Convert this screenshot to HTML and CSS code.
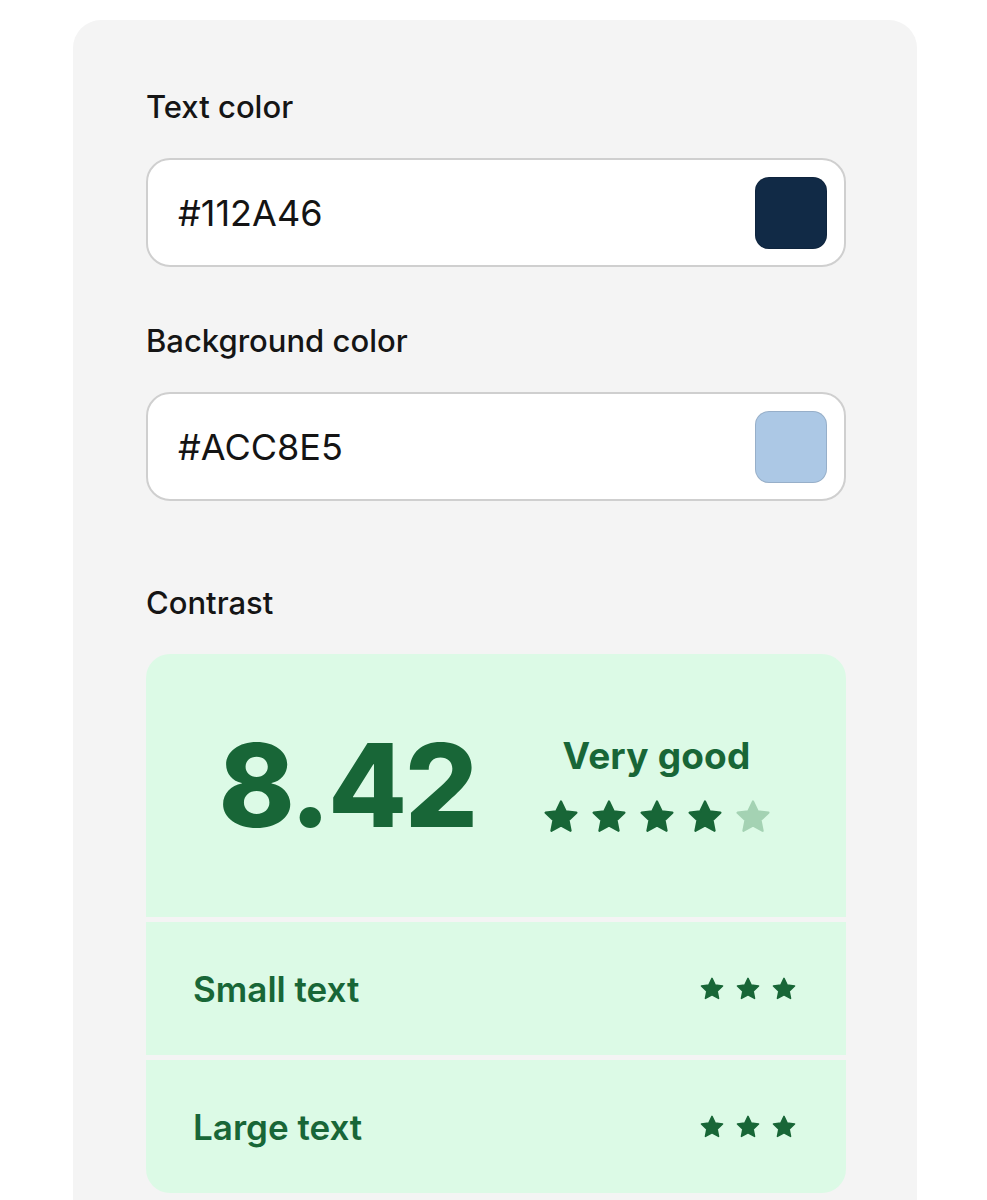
FILE: index.html
```html
<!DOCTYPE html>
<html lang="en">
<head>
<meta charset="utf-8">
<title>Contrast checker</title>
<link rel="stylesheet" href="styles.css">
</head>
<body>
<div class="card">
  <div class="field">
    <label class="label">Text color</label>
    <div class="input">
      <span class="value">#112A46</span>
      <span class="swatch swatch-dark"></span>
    </div>
  </div>
  <div class="field">
    <label class="label">Background color</label>
    <div class="input">
      <span class="value">#ACC8E5</span>
      <span class="swatch swatch-light"></span>
    </div>
  </div>
  <div class="field contrast">
    <label class="label">Contrast</label>
    <div class="panel">
      <div class="score">
        <div class="ratio">8.42</div>
        <div class="verdict">
          <div class="verdict-text">Very good</div>
          <div class="stars stars-big">
            <svg viewBox="0 0 24 24"><path d="M12 2.2l2.95 6.2 6.8.85-5 4.7 1.3 6.75L12 17.4l-6.05 3.3 1.3-6.75-5-4.7 6.8-.85z"/></svg>
            <svg viewBox="0 0 24 24"><path d="M12 2.2l2.95 6.2 6.8.85-5 4.7 1.3 6.75L12 17.4l-6.05 3.3 1.3-6.75-5-4.7 6.8-.85z"/></svg>
            <svg viewBox="0 0 24 24"><path d="M12 2.2l2.95 6.2 6.8.85-5 4.7 1.3 6.75L12 17.4l-6.05 3.3 1.3-6.75-5-4.7 6.8-.85z"/></svg>
            <svg viewBox="0 0 24 24"><path d="M12 2.2l2.95 6.2 6.8.85-5 4.7 1.3 6.75L12 17.4l-6.05 3.3 1.3-6.75-5-4.7 6.8-.85z"/></svg>
            <svg viewBox="0 0 24 24" class="off"><path d="M12 2.2l2.95 6.2 6.8.85-5 4.7 1.3 6.75L12 17.4l-6.05 3.3 1.3-6.75-5-4.7 6.8-.85z"/></svg>
          </div>
        </div>
      </div>
      <div class="row">
        <span class="row-label">Small text</span>
        <div class="stars stars-small">
          <svg viewBox="0 0 24 24"><path d="M12 2.2l2.95 6.2 6.8.85-5 4.7 1.3 6.75L12 17.4l-6.05 3.3 1.3-6.75-5-4.7 6.8-.85z"/></svg>
          <svg viewBox="0 0 24 24"><path d="M12 2.2l2.95 6.2 6.8.85-5 4.7 1.3 6.75L12 17.4l-6.05 3.3 1.3-6.75-5-4.7 6.8-.85z"/></svg>
          <svg viewBox="0 0 24 24"><path d="M12 2.2l2.95 6.2 6.8.85-5 4.7 1.3 6.75L12 17.4l-6.05 3.3 1.3-6.75-5-4.7 6.8-.85z"/></svg>
        </div>
      </div>
      <div class="row">
        <span class="row-label">Large text</span>
        <div class="stars stars-small">
          <svg viewBox="0 0 24 24"><path d="M12 2.2l2.95 6.2 6.8.85-5 4.7 1.3 6.75L12 17.4l-6.05 3.3 1.3-6.75-5-4.7 6.8-.85z"/></svg>
          <svg viewBox="0 0 24 24"><path d="M12 2.2l2.95 6.2 6.8.85-5 4.7 1.3 6.75L12 17.4l-6.05 3.3 1.3-6.75-5-4.7 6.8-.85z"/></svg>
          <svg viewBox="0 0 24 24"><path d="M12 2.2l2.95 6.2 6.8.85-5 4.7 1.3 6.75L12 17.4l-6.05 3.3 1.3-6.75-5-4.7 6.8-.85z"/></svg>
        </div>
      </div>
    </div>
  </div>
</div>
</body>
</html>
```

FILE: styles.css
```css
* { box-sizing: border-box; }

html, body {
  margin: 0;
  background: #ffffff;
}

body {
  font-family: Inter, "Noto Sans", sans-serif;
  color: #111111;
  padding: 20px 70px 0 73px;
}

.card {
  width: 844px;
  min-height: 1300px;
  background: #f4f4f4;
  border-radius: 28px;
  padding: 69px 71px 40px 73px;
  display: flex;
  flex-direction: column;
  gap: 56px;
}

.field {
  display: flex;
  flex-direction: column;
  gap: 33px;
}

.field.contrast {
  margin-top: 28px;
}

.label {
  font-size: 31px;
  line-height: 36px;
  font-weight: 500;
  color: #151515;
}

.input {
  height: 109px;
  background: #ffffff;
  border: 2px solid #cfcfcf;
  border-radius: 24px;
  display: flex;
  align-items: center;
  justify-content: space-between;
  padding: 0 17px 0 30px;
}

.value {
  font-size: 36px;
  font-weight: 400;
  color: #141414;
}

.swatch {
  width: 72px;
  height: 72px;
  border-radius: 14px;
  border: 1.5px solid rgba(0, 0, 0, 0.12);
}

.swatch-dark { background: #112a46; }
.swatch-light { background: #acc8e5; }

.panel {
  width: 700px;
  border-radius: 24px;
  overflow: hidden;
  display: flex;
  flex-direction: column;
  gap: 5px;
}

.score {
  height: 263px;
  background: #dcfae6;
  display: flex;
  align-items: center;
  justify-content: center;
  gap: 66px;
  padding-right: 2px;
}

.ratio {
  font-size: 115px;
  line-height: 1;
  font-weight: 800;
  color: #186637;
  letter-spacing: -2.5px;
}

.verdict {
  display: flex;
  flex-direction: column;
  align-items: center;
  gap: 22px;
}

.verdict-text {
  font-size: 37px;
  line-height: 40px;
  font-weight: 700;
  color: #186637;
  letter-spacing: 0.2px;
}

.stars {
  display: flex;
}

.stars svg path {
  fill: #186637;
  stroke: #186637;
  stroke-width: 1.4;
  stroke-linejoin: round;
}

.stars svg.off path {
  fill: #a4d2b3;
  stroke: #a4d2b3;
}

.stars-big { gap: 10px; }
.stars-big svg { width: 38px; height: 38px; }

.stars-small { gap: 10px; }
.stars-small svg { width: 26px; height: 26px; }

.row {
  height: 133px;
  background: #dcfae6;
  display: flex;
  align-items: center;
  justify-content: space-between;
  padding: 0 49px 0 47px;
}

.row-label {
  font-size: 35px;
  font-weight: 600;
  color: #186637;
}
```
